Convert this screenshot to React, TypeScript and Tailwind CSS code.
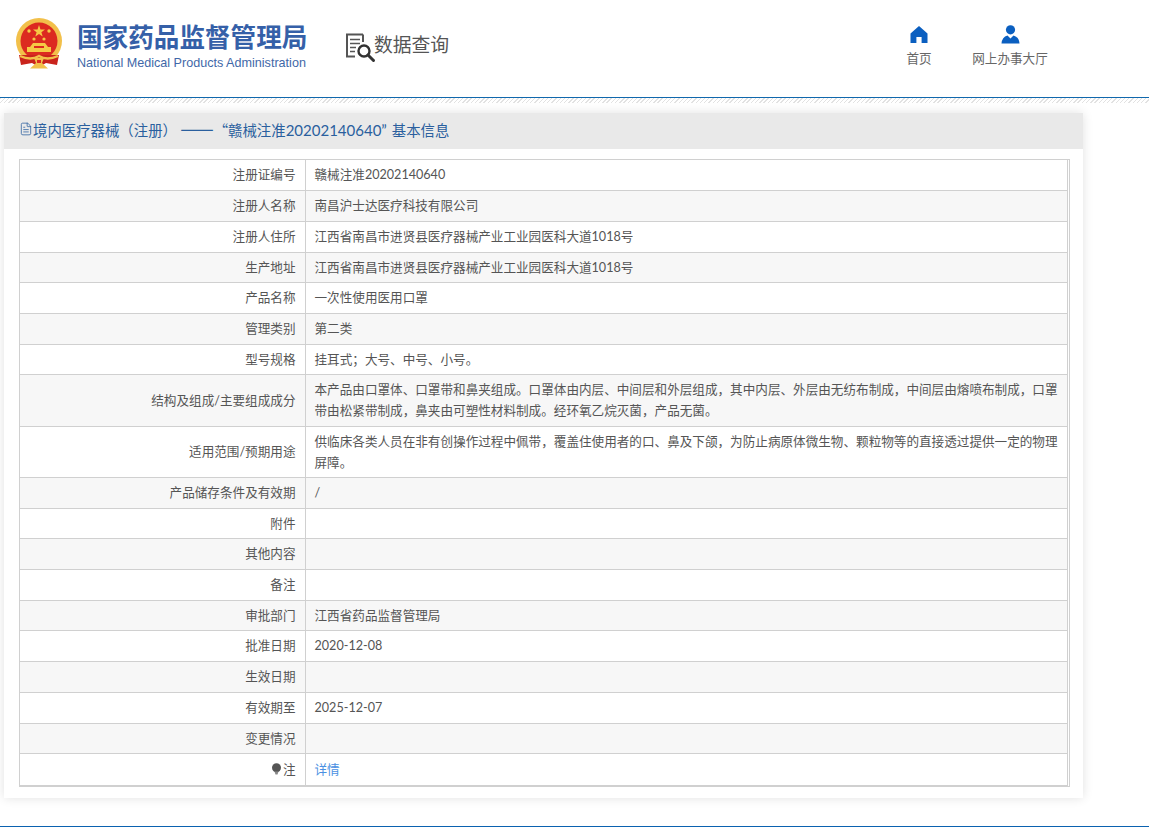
import { FileText } from "lucide-react";

type Row = { label: string; value?: string; height: number };

const rows: Row[] = [
  { label: "注册证编号", value: "赣械注准20202140640", height: 30 },
  { label: "注册人名称", value: "南昌沪士达医疗科技有限公司", height: 31 },
  { label: "注册人住所", value: "江西省南昌市进贤县医疗器械产业工业园医科大道1018号", height: 31 },
  { label: "生产地址", value: "江西省南昌市进贤县医疗器械产业工业园医科大道1018号", height: 30 },
  { label: "产品名称", value: "一次性使用医用口罩", height: 31 },
  { label: "管理类别", value: "第二类", height: 31 },
  { label: "型号规格", value: "挂耳式；大号、中号、小号。", height: 30 },
  {
    label: "结构及组成/主要组成成分",
    value:
      "本产品由口罩体、口罩带和鼻夹组成。口罩体由内层、中间层和外层组成，其中内层、外层由无纺布制成，中间层由熔喷布制成，口罩带由松紧带制成，鼻夹由可塑性材料制成。经环氧乙烷灭菌，产品无菌。",
    height: 52,
  },
  {
    label: "适用范围/预期用途",
    value:
      "供临床各类人员在非有创操作过程中佩带，覆盖住使用者的口、鼻及下颌，为防止病原体微生物、颗粒物等的直接透过提供一定的物理屏障。",
    height: 51,
  },
  { label: "产品储存条件及有效期", value: "/", height: 31 },
  { label: "附件", height: 30 },
  { label: "其他内容", height: 31 },
  { label: "备注", height: 31 },
  { label: "审批部门", value: "江西省药品监督管理局", height: 30 },
  { label: "批准日期", value: "2020-12-08", height: 31 },
  { label: "生效日期", height: 31 },
  { label: "有效期至", value: "2025-12-07", height: 31 },
  { label: "变更情况", height: 30 },
];

function Emblem() {
  return (
    <svg width="48" height="51" viewBox="0 0 48 51">
      <circle cx="24" cy="23" r="23" fill="#f2c04a" />
      <circle cx="24" cy="23" r="18.5" fill="#dc2a20" />
      <path d="M4 37 L44 37 L42 47 L31 45 L24 49 L17 45 L6 47 Z" fill="#c9231c" />
      <polygon points="24,7 25.5,11.5 30,11.5 26.4,14.2 27.7,18.6 24,16 20.3,18.6 21.6,14.2 18,11.5 22.5,11.5" fill="#f6c945" />
      <circle cx="14" cy="13" r="1.7" fill="#f6c945" />
      <circle cx="34" cy="13" r="1.7" fill="#f6c945" />
      <circle cx="19" cy="21" r="1.6" fill="#f6c945" />
      <circle cx="29" cy="21" r="1.6" fill="#f6c945" />
      <path d="M15 29 L18 25 L30 25 L33 29 L36 29 L36 34 L12 34 L12 29 Z" fill="#f6c945" />
      <rect x="19" y="28" width="10" height="2" fill="#dc2a20" />
      <path d="M5 38 Q16 43 24 38 Q32 43 43 38" fill="none" stroke="#f2c04a" strokeWidth="2.4" />
      <path d="M19 40 L29 40 L27 45 L33 50.5 L15 50.5 L21 45 Z" fill="#f2c04a" />
      <rect x="22" y="42" width="4" height="3" fill="#dc2a20" />
    </svg>
  );
}

function QueryIcon() {
  return (
    <svg width="31" height="30" viewBox="0 0 31 30" fill="none">
      <path d="M18 1.5 H2 V23.5 H10" stroke="#555" strokeWidth="2" />
      <path d="M18 1.5 V9" stroke="#555" strokeWidth="2" />
      <path d="M5 6.5 H15 M5 10.5 H15 M5 14.5 H11 M5 18.5 H10" stroke="#555" strokeWidth="1.6" />
      <circle cx="19" cy="18" r="5.5" stroke="#333" strokeWidth="2.4" />
      <path d="M23 22 L28.5 27.5" stroke="#333" strokeWidth="3" strokeLinecap="round" />
    </svg>
  );
}

function HomeIcon() {
  return (
    <svg width="18" height="17" viewBox="0 0 18 17">
      <path d="M9 0 L17.5 7.5 V17 H11.6 V11 H6.4 V17 H0.5 V7.5 Z" fill="#0b5fc0" />
    </svg>
  );
}

function UserIcon() {
  return (
    <svg width="19" height="19" viewBox="0 0 19 19">
      <circle cx="9.5" cy="4.8" r="4.6" fill="#0b5fc0" />
      <path d="M0.5 18.5 Q1 12 6.5 10.5 L9.5 13.5 L12.5 10.5 Q18 12 18.5 18.5 Z" fill="#0b5fc0" />
    </svg>
  );
}

function BulbIcon() {
  return (
    <svg width="11" height="13" viewBox="0 0 11 13" className="mr-[1px]">
      <circle cx="5.5" cy="4.8" r="4.5" fill="#555" />
      <path d="M3.5 8.5 H7.5 L6.5 11.5 H4.5 Z" fill="#888" />
    </svg>
  );
}

export default function App() {
  return (
    <div className="h-[827px] w-[1149px] overflow-hidden bg-white font-['Lato','Noto_Sans_CJK_SC',sans-serif] text-[#555] [text-spacing-trim:space-all]">
      {/* Header */}
      <header className="flex h-[98px] border-b border-[#1068ad]">
        <div className="ml-[15px] mt-[18px] w-[48px]">
          <Emblem />
        </div>
        <div className="ml-[14px] mt-[21px] w-[232px]">
          <div className="whitespace-nowrap text-[25.6px] font-bold leading-[32px] text-[#3560a8]">
            国家药品监督管理局
          </div>
          <div className="mt-[2px] whitespace-nowrap font-['Liberation_Sans',sans-serif] text-[12.6px] leading-[16px] text-[#3f68a8]">
            National Medical Products Administration
          </div>
        </div>
        <div className="ml-[36px] mt-[33px] flex h-[30px] items-start">
          <QueryIcon />
          <span className="-ml-[2px] whitespace-nowrap text-[18.8px] leading-[24px] text-[#555]">数据查询</span>
        </div>
        <nav className="ml-auto flex text-[12.6px] leading-[18px] text-[#666]">
          <a className="mt-[26px] flex w-[60px] flex-col items-center">
            <HomeIcon />
            <span className="mt-[7px]">首页</span>
          </a>
          <a className="ml-[22px] mr-[100px] mt-[25px] flex w-[78px] flex-col items-center">
            <UserIcon />
            <span className="mt-[6px] whitespace-nowrap">网上办事大厅</span>
          </a>
        </nav>
      </header>
      <div className="h-[5px] bg-[repeating-linear-gradient(135deg,#e2e2e2_0,#e2e2e2_1px,#ffffff_1px,#ffffff_3px)]" />

      {/* Detail card */}
      <main className="ml-[4px] mt-[10px] w-[1079px] bg-white shadow-[0_0_10px_rgba(0,0,0,0.12)]">
        <div className="flex h-[36px] items-center bg-[#e9e9e9] pb-[4px] pl-[15px] font-['Noto_Sans_CJK_SC',sans-serif] text-[14.4px] leading-[20px] text-[#2a5f9e]">
          <FileText size={14} strokeWidth={1.3} />
          <span className="whitespace-pre">
            境内医疗器械（注册） <span className="text-[20px] leading-[20px]">——</span>“赣械注准
            <span className="pr-[5px] font-['Lato',sans-serif] text-[15px]">20202140640”</span>
            基本信息
          </span>
        </div>
        <div className="px-[15px] pb-[11px] pt-[10px]">
          <div className="w-[1051px] border border-[#d0d0d0] pr-[1px]">
            <table className="w-full table-fixed border-collapse text-[12.6px] leading-[21px]">
              <colgroup>
                <col className="w-[285px]" />
                <col />
              </colgroup>
              <tbody>
                {rows.map((row, i) => (
                  <tr key={row.label} className={i % 2 === 1 ? "bg-[#f7f7f7]" : "bg-white"} style={{ height: row.height }}>
                    <td className="border-b border-r border-[#d0d0d0] pr-[9px] text-right">{row.label}</td>
                    <td className="border-b border-r border-[#d0d0d0] pl-[9px] pr-[5px]">{row.value}</td>
                  </tr>
                ))}
                <tr className="h-[32px] bg-white">
                  <td className="border-b border-r border-[#d0d0d0] pr-[9px] pt-[1px]">
                    <span className="flex items-center justify-end">
                      <BulbIcon />注
                    </span>
                  </td>
                  <td className="border-b border-r border-[#d0d0d0] pl-[9px] pt-[1px] text-[#4a90e2]">详情</td>
                </tr>
              </tbody>
            </table>
          </div>
        </div>
      </main>
      <div className="mt-[28px] border-t border-[#0b62b0]" />
    </div>
  );
}
